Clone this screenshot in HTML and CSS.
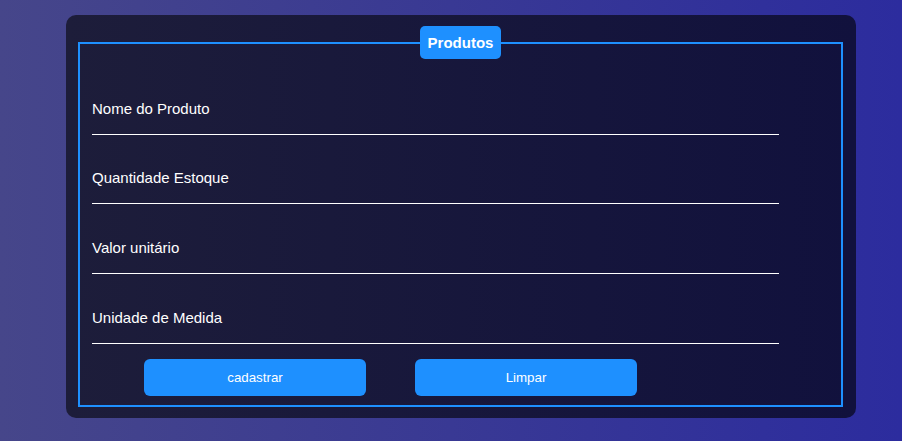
FILE: index.html
```html
<!DOCTYPE html>
<html lang="pt-BR">
<head>
<meta charset="utf-8">
<title>Produtos</title>
<link rel="stylesheet" href="styles.css">
</head>
<body>
  <main class="card">
    <fieldset class="box">
      <legend class="box-title">Produtos</legend>
      <div class="fields">
        <div class="field"><span class="field-label">Nome do Produto</span></div>
        <div class="field"><span class="field-label">Quantidade Estoque</span></div>
        <div class="field"><span class="field-label">Valor unitário</span></div>
        <div class="field"><span class="field-label">Unidade de Medida</span></div>
      </div>
      <div class="actions">
        <button class="btn" type="button">cadastrar</button>
        <button class="btn" type="button">Limpar</button>
      </div>
    </fieldset>
  </main>
</body>
</html>
```

FILE: styles.css
```css
* { box-sizing: border-box; }

html, body {
  margin: 0;
  height: 100%;
}

body {
  background: linear-gradient(to right, #46468a, #2c2c9e);
  font-family: "Liberation Sans", Arial, sans-serif;
  color: #fff;
  padding-top: 15px;
  padding-left: 66px;
}

.card {
  width: 790px;
  height: 403px;
  border-radius: 10px;
  background: linear-gradient(to right, #1d1d3a, #11113d);
  padding: 11px 13px 12px 12px;
}

.box {
  margin: 0;
  border: 2px solid #1e90ff;
  padding: 0 12px 8px 12px;
  height: 381px;
}

.box-title {
  margin: 0 auto;
  background: #1e90ff;
  color: #fff;
  font-weight: bold;
  font-size: 15px;
  line-height: 17px;
  padding: 8px 8px;
  border-radius: 5px;
}

.fields {
  width: 687px;
  padding-top: 6px;
}

.field {
  height: 69.67px;
  display: flex;
  align-items: flex-end;
  padding-bottom: 17px;
  border-bottom: 1px solid #fff;
}

.field-label {
  font-size: 15px;
  line-height: 17px;
}

.actions {
  display: flex;
  gap: 49px;
  padding-left: 52px;
  margin-top: 15px;
}

.btn {
  width: 222px;
  height: 37px;
  border: none;
  border-radius: 6px;
  background: #1e90ff;
  color: #fff;
  font-family: "Liberation Sans", Arial, sans-serif;
  font-size: 13.33px;
}
```
